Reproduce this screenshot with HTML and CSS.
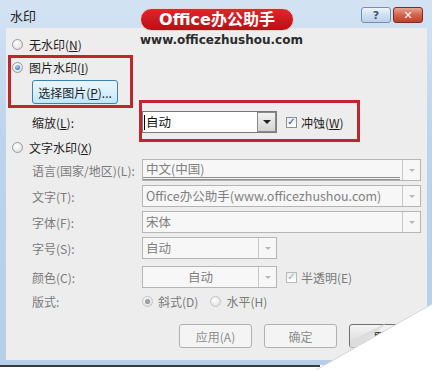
FILE: index.html
```html
<!DOCTYPE html>
<html lang="zh-CN">
<head>
    <meta charset="UTF-8">
    <title>水印</title>
    <link rel="stylesheet" href="styles.css">
</head>
<body>
<div class="screen">
    <div class="window">
        <div class="titlebar">
            <span class="title">水印</span>
            <div class="caption-buttons">
                <span class="cap-btn help">?</span>
                <span class="cap-btn close">✕</span>
            </div>
        </div>

        <div class="client">
            <label class="option first"><span class="radio"></span><span>无水印(<u>N</u>)</span></label>
            <label class="option"><span class="radio on"></span><span>图片水印(<u>I</u>)</span></label>
            <button class="btn pick">选择图片(<u>P</u>)...</button>

            <div class="field scale">
                <span class="lbl">缩放(<u>L</u>):</span>
                <div class="combo active narrow">
                    <span class="value"><span class="caret"></span>自动</span>
                    <span class="arrow"></span>
                </div>
                <label class="check"><span class="box on"></span><span>冲蚀(<u>W</u>)</span></label>
            </div>

            <label class="option text-wm"><span class="radio"></span><span>文字水印(<u>X</u>)</span></label>

            <div class="field">
                <span class="lbl">语言(国家/地区)(L):</span>
                <div class="combo wide">
                    <span class="value lined">中文(中国)</span>
                    <span class="arrow"></span>
                </div>
            </div>
            <div class="field">
                <span class="lbl">文字(T):</span>
                <div class="combo wide">
                    <span class="value">Office办公助手(www.officezhushou.com)</span>
                    <span class="arrow"></span>
                </div>
            </div>
            <div class="field">
                <span class="lbl">字体(F):</span>
                <div class="combo wide">
                    <span class="value">宋体</span>
                    <span class="arrow"></span>
                </div>
            </div>
            <div class="field">
                <span class="lbl">字号(S):</span>
                <div class="combo narrow">
                    <span class="value">自动</span>
                    <span class="arrow"></span>
                </div>
            </div>
            <div class="field color">
                <span class="lbl">颜色(C):</span>
                <div class="combo narrow">
                    <span class="value center">自动</span>
                    <span class="arrow"></span>
                </div>
                <label class="check dim"><span class="box on"></span><span>半透明(E)</span></label>
            </div>
            <div class="field layout">
                <span class="lbl">版式:</span>
                <label class="option dim"><span class="radio on gray"></span><span>斜式(D)</span></label>
                <label class="option dim"><span class="radio"></span><span>水平(H)</span></label>
            </div>

            <div class="actions">
                <button class="btn off">应用(A)</button>
                <button class="btn off">确定</button>
                <button class="btn">取消</button>
            </div>
        </div>
    </div>
    <div class="shadow-line"></div>

    <!-- annotations laid over the screenshot -->
    <div class="mark mark-pic"></div>
    <div class="mark mark-scale"></div>
    <div class="logo">
        <span class="pill">Office办公助手</span>
        <span class="url">www.officezhushou.com</span>
    </div>
    <svg class="curl" width="432" height="370" viewBox="0 0 432 370">
        <defs>
            <linearGradient id="fold" x1="0" y1="0" x2="0.3" y2="1">
                <stop offset="0" stop-color="#bdbdbd"/>
                <stop offset="1" stop-color="#f4f4f4"/>
            </linearGradient>
        </defs>
        <polygon points="346,358 388,322 352,340" fill="url(#fold)" opacity="0.6"/>
        <polygon points="316,370 432,304 432,370" fill="#ffffff"/>
        <line x1="316" y1="370" x2="432" y2="304" stroke="#d6d6d6" stroke-width="1"/>
    </svg>
</div>
</body>
</html>
```

FILE: styles.css
```css
body {
    margin: 0;
    background: #ffffff;
    font-family: "Noto Sans CJK SC", "Noto Sans", sans-serif;
    font-size: 12px;
    color: #1e1e1e;
}
u {
    text-decoration: underline;
    text-underline-offset: 1px;
}
.screen {
    position: relative;
    width: 432px;
    height: 370px;
    overflow: hidden;
}
.window {
    width: 432px;
    height: 365px;
    box-sizing: border-box;
    padding: 0 5px 5px 6px;
    background: linear-gradient(#d3e3f4, #bcd3ea 40%, #b6cee8);
    display: flex;
    flex-direction: column;
}
.shadow-line {
    height: 2px;
    background: #3a3a3a;
    width: 320px;
}
.titlebar {
    height: 28px;
    display: flex;
    align-items: flex-start;
    justify-content: space-between;
}
.title {
    margin: 6px 0 0 4px;
    font-size: 13px;
    color: #222;
}
.caption-buttons {
    display: flex;
    gap: 2px;
    margin-top: 7px;
    margin-right: 4px;
}
.cap-btn {
    width: 30px;
    height: 16px;
    border: 1px solid #7390b0;
    border-radius: 3px;
    box-sizing: border-box;
    display: flex;
    align-items: center;
    justify-content: center;
    font-size: 11px;
    font-weight: bold;
    font-family: "DejaVu Sans", sans-serif;
}
.help {
    background: linear-gradient(#eef4fb, #cfdfef 50%, #bcd2ea);
    color: #3d5575;
}
.close {
    width: 30px;
    border-color: #7d2a20;
    background: linear-gradient(#e8a493, #d2634b 50%, #c0402a);
    color: #fff;
}
.client {
    flex: 1;
    background: #ededed;
    padding: 8px 0 0 6px;
    display: flex;
    flex-direction: column;
    align-items: flex-start;
}
.option {
    display: flex;
    align-items: center;
    gap: 4px;
    height: 16px;
}
.option + .option { margin-top: 7px; }
.radio {
    width: 11px;
    height: 11px;
    border-radius: 50%;
    border: 1px solid #9a9a9a;
    background: radial-gradient(circle at 40% 35%, #ffffff, #d8d8d8);
    box-sizing: border-box;
    position: relative;
    margin-right: 2px;
}
.radio.on::after {
    content: "";
    position: absolute;
    left: 2px;
    top: 2px;
    width: 5px;
    height: 5px;
    border-radius: 50%;
    background: radial-gradient(circle at 40% 35%, #a8d4f5, #1d5fa8);
}
.radio.gray::after {
    background: radial-gradient(circle, #b0b0b0, #7e7e7e);
}
.btn {
    font-family: inherit;
    font-size: 12px;
    height: 24px;
    padding: 0 8px;
    border: 1px solid #707070;
    border-radius: 3px;
    background: linear-gradient(#f4f4f4, #e6e6e6 50%, #d6d6d6);
    color: #1e1e1e;
}
.pick {
    margin: 5px 0 0 20px;
    width: 86px;
    padding: 0;
    border-color: #3c7fb1;
    background: linear-gradient(#eaf6fd, #d9f0fc 50%, #bee6fd);
}
.field {
    display: flex;
    align-items: center;
    height: 22px;
    margin-top: 4px;
    padding-left: 20px;
}
.lbl {
    width: 110px;
    color: #7a7a7a;
}
.scale {
    margin-top: 7px;
}
.scale .lbl {
    color: #1e1e1e;
}
.combo {
    height: 22px;
    box-sizing: border-box;
    border: 1px solid #b5b5b5;
    background: #f7f7f7;
    display: flex;
}
.combo.wide { width: 279px; }
.combo.narrow { width: 135px; }
.combo .value {
    flex: 1;
    padding: 0 3px;
    line-height: 20px;
    color: #808080;
    white-space: nowrap;
    overflow: hidden;
    font-size: 12.5px;
}
.combo .value.center {
    text-align: center;
}
.combo .value.lined {
    line-height: 17px;
    height: 17px;
    border-bottom: 3px double #8e8e8e;
    margin-right: 2px;
}
.combo .arrow {
    width: 17px;
    border-left: 1px solid #c8c8c8;
    display: flex;
    align-items: center;
    justify-content: center;
}
.combo .arrow::after {
    content: "";
    border-left: 3px solid transparent;
    border-right: 3px solid transparent;
    border-top: 3px solid #b8b8b8;
}
.combo.active {
    border-color: #7a7a7a;
    background: #ffffff;
}
.combo.active .value {
    color: #111;
    display: flex;
    align-items: center;
    padding-left: 1px;
}
.caret {
    width: 1px;
    height: 15px;
    background: #000;
    margin-right: 1px;
}
.combo.active .arrow {
    border: 1px solid #8a8a8a;
    background: linear-gradient(#f2f2f2, #d4d4d4);
}
.combo.active .arrow::after {
    border-top-color: #222;
    border-left-width: 4px;
    border-right-width: 4px;
    border-top-width: 4px;
}
.check {
    display: flex;
    align-items: center;
    gap: 4px;
    margin-left: 9px;
}
.box {
    width: 11px;
    height: 11px;
    box-sizing: border-box;
    border: 1px solid #8f8f8f;
    background: linear-gradient(#e6ecf2, #ffffff);
    display: flex;
    align-items: center;
    justify-content: center;
    font-size: 10px;
    line-height: 1;
    color: #2a4c86;
}
.box.on::after {
    content: "✓";
    font-family: "DejaVu Sans", sans-serif;
    font-weight: bold;
}
.dim { color: #7a7a7a; }
.check.dim .box {
    border-color: #b8b8b8;
    color: #a8a8a8;
}
.text-wm {
    margin-top: 6px;
}
.color { margin-top: 7px; }
.layout {
    margin-top: 1px;
    height: 24px;
}
.layout .option { gap: 3px; }
.layout .option + .option { margin: 0 0 0 12px; }
.layout .radio { border-color: #c4c4c4; }
.actions {
    display: flex;
    gap: 12px;
    margin: 11px 0 0 167px;
}
.actions .btn {
    width: 73px;
}
.btn.off {
    border-color: #adb2b5;
    background: #f4f4f4;
    color: #8d8d8d;
}
.mark {
    position: absolute;
    border: 3px solid #c0262e;
    box-sizing: border-box;
}
.mark-pic {
    left: 8px;
    top: 55px;
    width: 125px;
    height: 53px;
}
.mark-scale {
    left: 139px;
    top: 100px;
    width: 221px;
    height: 42px;
}
.logo {
    position: absolute;
    left: 140px;
    top: 8px;
    display: flex;
    flex-direction: column;
    align-items: flex-start;
}
.pill {
    width: 154px;
    height: 23px;
    box-sizing: border-box;
    border-radius: 12px;
    border: 1px solid #f3d0d0;
    background: linear-gradient(#e0262b, #b90f14);
    color: #ffffff;
    font-family: "DejaVu Sans", "Noto Sans CJK SC", sans-serif;
    font-weight: bold;
    font-size: 16px;
    line-height: 21px;
    text-align: center;
}
.url {
    margin-top: 2px;
    font-family: "DejaVu Sans", sans-serif;
    font-weight: bold;
    font-size: 12px;
    color: #2b2b2b;
}
.curl {
    position: absolute;
    left: 0;
    top: 0;
}
```
